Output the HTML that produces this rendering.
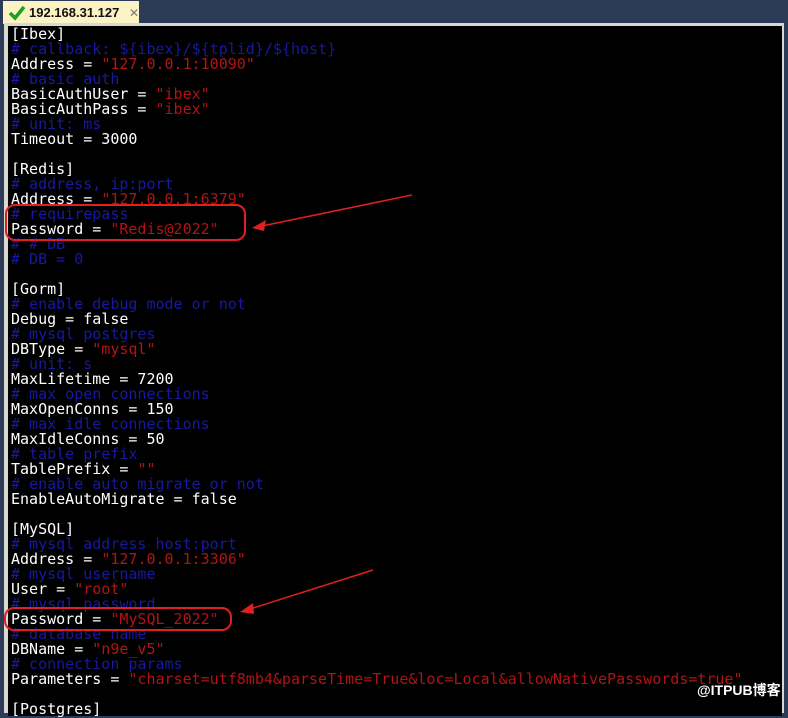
<!DOCTYPE html>
<html><head><meta charset="utf-8"><style>
html,body{margin:0;padding:0;width:788px;height:703px;overflow:hidden;background:#2b3b58;}
#bar{position:absolute;left:0;top:0;width:788px;height:23px;background:#2b3b58;}
#tab{position:absolute;left:3px;top:1px;width:136px;height:23px;background:#fbf3c4;font:bold 13px "Liberation Sans",sans-serif;color:#111;}
#tab .t{position:absolute;left:26px;top:4px;}
#tab .x{position:absolute;left:126px;top:5px;font:12px "Liberation Sans",sans-serif;color:#777;}
#frame{position:absolute;left:4px;top:23px;width:780px;height:690px;background:#d8d8d0;}
#term{position:absolute;left:8px;top:26px;width:774px;height:690px;background:#000;}
pre{position:absolute;left:11px;top:27px;margin:0;font:15px/15px "DejaVu Sans Mono","Liberation Mono",monospace;color:#fff;letter-spacing:0;}
.c{color:#1818a0}.s{color:#b01414}
#wm{position:absolute;left:697px;top:680px;font:bold 14px "Liberation Sans","Noto Sans CJK SC",sans-serif;color:#fff;}
svg{position:absolute;left:0;top:0;}
</style></head><body>
<div id="bar"></div>
<div id="tab"><svg width="20" height="20" style="left:5px;top:2px"><path d="M2 10 L7 15 L16 4" stroke="#1aa01a" stroke-width="3.5" fill="none"/></svg><span class="t">192.168.31.127</span><span class="x">✕</span></div>
<div id="frame"></div>
<div id="term"></div>
<pre>[Ibex]
<span class="c"># callback: ${ibex}/${tplid}/${host}</span>
Address = <span class="s">"127.0.0.1:10090"</span>
<span class="c"># basic auth</span>
BasicAuthUser = <span class="s">"ibex"</span>
BasicAuthPass = <span class="s">"ibex"</span>
<span class="c"># unit: ms</span>
Timeout = 3000

[Redis]
<span class="c"># address, ip:port</span>
Address = <span class="s">"127.0.0.1:6379"</span>
<span class="c"># requirepass</span>
Password = <span class="s">"Redis@2022"</span>
<span class="c"># # DB</span>
<span class="c"># DB = 0</span>

[Gorm]
<span class="c"># enable debug mode or not</span>
Debug = false
<span class="c"># mysql postgres</span>
DBType = <span class="s">"mysql"</span>
<span class="c"># unit: s</span>
MaxLifetime = 7200
<span class="c"># max open connections</span>
MaxOpenConns = 150
<span class="c"># max idle connections</span>
MaxIdleConns = 50
<span class="c"># table prefix</span>
TablePrefix = <span class="s">""</span>
<span class="c"># enable auto migrate or not</span>
EnableAutoMigrate = false

[MySQL]
<span class="c"># mysql address host:port</span>
Address = <span class="s">"127.0.0.1:3306"</span>
<span class="c"># mysql username</span>
User = <span class="s">"root"</span>
<span class="c"># mysql password</span>
Password = <span class="s">"MySQL_2022"</span>
<span class="c"># database name</span>
DBName = <span class="s">"n9e_v5"</span>
<span class="c"># connection params</span>
Parameters = <span class="s">"charset=utf8mb4&amp;parseTime=True&amp;loc=Local&amp;allowNativePasswords=true"</span>

[Postgres]</pre>
<svg width="788" height="703">
<rect x="6" y="205" width="239" height="35" rx="9" fill="none" stroke="#e02020" stroke-width="2"/>
<line x1="412" y1="195" x2="262" y2="226" stroke="#e02020" stroke-width="1.5"/>
<path d="M252 228 L266 220 L264 231 Z" fill="#e02020"/>
<rect x="5" y="608" width="226" height="22" rx="9" fill="none" stroke="#e02020" stroke-width="2"/>
<line x1="373" y1="570" x2="250" y2="609" stroke="#e02020" stroke-width="1.5"/>
<path d="M240 612 L253 603 L254 614 Z" fill="#e02020"/>
</svg>
<div id="wm">@ITPUB博客</div>
</body></html>
